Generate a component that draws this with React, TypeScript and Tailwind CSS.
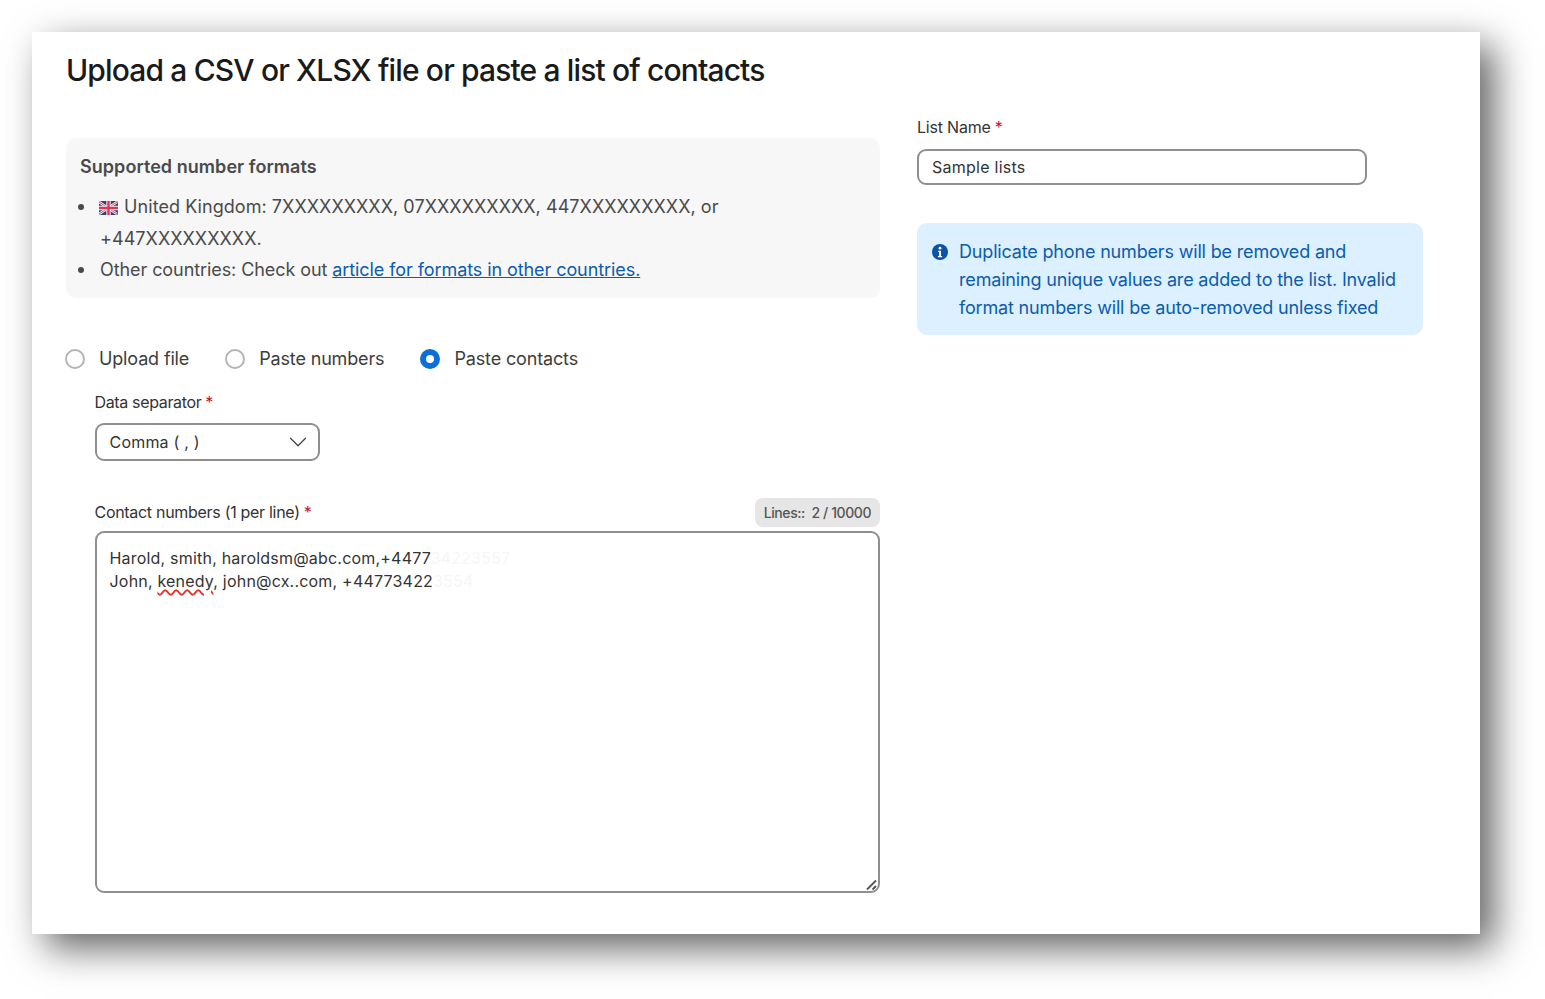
import { ChevronDown } from "lucide-react";

function Req() {
  return <span className="ml-[4px] text-[#c8102e]">*</span>;
}

function UkFlag() {
  return (
    <svg width="19" height="14" viewBox="0 0 19 14" className="inline-block -ml-[1px] mr-[1px] align-[-2px]">
      <rect width="19" height="14" rx="1.5" fill="#3b3f78" />
      <path d="M0 1 18 13M18 1 0 13" stroke="#f4f0f0" strokeWidth="2.6" />
      <path d="M0 1 18 13M18 1 0 13" stroke="#d8365a" strokeWidth="0.9" />
      <path d="M9.5 0v14M0 7h19" stroke="#f4f0f0" strokeWidth="4.4" />
      <path d="M9.5 0v14M0 7h19" stroke="#d8365a" strokeWidth="2.4" />
    </svg>
  );
}

function Bullet({ top }: { top: string }) {
  return <span className={`${top} w-[6px] h-[6px] shrink-0 rounded-full bg-[#4a4a4a] mr-[16px]`} />;
}

function Radio({ label, checked }: { label: string; checked?: boolean }) {
  return (
    <div className="flex items-center gap-[14px]">
      {checked ? (
        <span className="w-[20px] h-[20px] rounded-full border-[6px] border-[#0a6fd8] bg-white" />
      ) : (
        <span className="w-[20px] h-[20px] rounded-full border-2 border-[#b4b4b4] bg-white" />
      )}
      <span className="text-[18px] leading-[24px] text-[#3d3d3d] tracking-[-0.15px]">{label}</span>
    </div>
  );
}

export default function App() {
  return (
    <div className="w-[1545px] h-[999px] bg-white pl-[32px] pt-[32px] overflow-hidden font-['Inter',sans-serif]">
      <div className="w-[1448px] h-[902px] bg-white shadow-[14px_14px_36px_rgba(0,0,0,0.62)] pl-[34px] pt-[18px]">
        <h1 className="text-[30px] leading-[40px] font-medium text-[#1a1a1a] tracking-[-0.85px]">
          Upload a CSV or XLSX file or paste a list of contacts
        </h1>

        <div className="flex gap-[37px] mt-[28px]">
          <div className="w-[814px] pt-[20px]">
            <div className="h-[160px] rounded-[10px] bg-[#f7f7f7] pl-[14px] pt-[16px] text-[18px] text-[#4a4a4a]">
              <div className="font-semibold leading-[26px] tracking-[0.05px]">Supported number formats</div>
              <ul className="mt-[11px]">
                <li className="flex leading-[32px] tracking-[0.05px]">
                  <Bullet top="mt-[13px] -ml-[2px]" />
                  <div className="w-[640px]">
                    <UkFlag /> United Kingdom: 7XXXXXXXXX, 07XXXXXXXXX, 447XXXXXXXXX, or +447XXXXXXXXX.
                  </div>
                </li>
                <li className="flex leading-[30px] tracking-[-0.08px]">
                  <Bullet top="mt-[12px] -ml-[2px]" />
                  <div>
                    Other countries: Check out{" "}
                    <a href="#" className="text-[#0b5cad] underline">
                      article for formats in other countries.
                    </a>
                  </div>
                </li>
              </ul>
            </div>

            <div className="flex items-center gap-[36px] mt-[49px] -ml-[1px]">
              <Radio label="Upload file" />
              <Radio label="Paste numbers" />
              <Radio label="Paste contacts" checked />
            </div>

            <div className="pl-[28.5px] mt-[20px]">
              <div className="text-[16px] leading-[22px] text-[#333] tracking-[-0.35px]">
                Data separator
                <Req />
              </div>
              <div className="mt-[10px] w-[225px] h-[38px] rounded-[9px] border-2 border-[#8f8f8f] flex items-center justify-between pl-[13px] pr-[5px] text-[16px] text-[#333] tracking-[0.2px]">
                <span>Comma ( , )</span>
                <ChevronDown size={30} strokeWidth={1.05} className="text-[#444]" />
              </div>

              <div className="flex items-end justify-between mt-[37px]">
                <div className="text-[16px] leading-[22px] text-[#333] tracking-[-0.3px] pb-[4px]">
                  Contact numbers (1 per line)
                  <Req />
                </div>
                <div className="h-[29px] rounded-[8px] bg-[#e6e6e6] px-[9px] flex items-center text-[14px] font-medium text-[#555] tracking-[-0.42px] whitespace-pre">
                  Lines::  2 / 10000
                </div>
              </div>
              <div className="relative mt-[4px] h-[362px] rounded-[9px] border-2 border-[#8f8f8f] pl-[13px] pt-[14px] text-[16px] leading-[23px] text-[#333] tracking-[0.2px]">
                <div>
                  Harold, smith, haroldsm@abc.com,+4477<span className="text-[#f6f6f6]">34223557</span>
                </div>
                <div>
                  John,{" "}
                  <span className="underline decoration-wavy decoration-[#e0342c] decoration-[1.5px] underline-offset-2">
                    kenedy
                  </span>
                  , john@cx..com, +44773422<span className="text-[#f6f6f6]">3554</span>
                </div>
                <svg width="12" height="12" viewBox="0 0 12 12" className="absolute right-[0px] bottom-[0px]">
                  <path d="M1 10.5 10 1.5M6.5 10.5 10 7" stroke="#555" strokeWidth="1.8" />
                </svg>
              </div>
            </div>
          </div>

          <div className="w-[506px]">
            <div className="text-[16px] leading-[22px] text-[#333] tracking-[-0.2px] -mt-[2px]">
              List Name
              <Req />
            </div>
            <div className="mt-[11px] w-[450px] h-[36px] rounded-[9px] border-2 border-[#8f8f8f] flex items-center pl-[13px] text-[16px] text-[#333] tracking-[0.25px]">
              Sample lists
            </div>
            <div className="mt-[38px] h-[112px] rounded-[10px] bg-[#dcf0ff] flex gap-[11px] pl-[15px] pt-[15px] text-[18px] leading-[28px] text-[#0b5cad] tracking-[-0.17px]">
              <svg width="16" height="16" viewBox="0 0 16 16" className="shrink-0 mt-[6px]">
                <circle cx="8" cy="8" r="8" fill="#0b52a8" />
                <circle cx="8" cy="4.2" r="1.4" fill="#fff" />
                <path d="M6.2 6.8h2.8v5.2h1.2v1.2H5.9V12h1.2V8H6.2z" fill="#fff" />
              </svg>
              <div className="w-[450px]">
                Duplicate phone numbers will be removed and remaining unique values are added to the list. Invalid format numbers will be auto-removed unless fixed
              </div>
            </div>
          </div>
        </div>
      </div>
    </div>
  );
}
